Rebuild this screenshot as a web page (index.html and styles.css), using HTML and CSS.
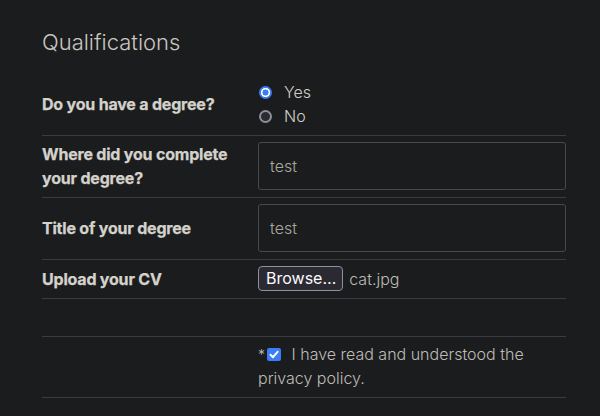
FILE: index.html
```html
<!DOCTYPE html>
<html lang="en">
<head>
<meta charset="utf-8">
<title>Qualifications</title>
<link rel="stylesheet" href="styles.css">
</head>
<body>
<section class="form">
  <h2 class="title">Qualifications</h2>
  <div class="row">
    <div class="label">Do you have a degree?</div>
    <div class="field radios">
      <label class="opt"><input type="radio" name="deg" class="radio" checked><span>Yes</span></label>
      <label class="opt"><input type="radio" name="deg" class="radio"><span>No</span></label>
    </div>
  </div>
  <div class="row">
    <div class="label">Where did you complete your degree?</div>
    <div class="field"><input class="text" type="text" value="test"></div>
  </div>
  <div class="row">
    <div class="label">Title of your degree</div>
    <div class="field"><input class="text" type="text" value="test"></div>
  </div>
  <div class="row">
    <div class="label">Upload your CV</div>
    <div class="field file"><span class="browse">Browse…</span><span class="fname">cat.jpg</span></div>
  </div>
  <div class="row">
    <div class="label"></div>
    <div class="field empty"></div>
  </div>
  <div class="row">
    <div class="label"></div>
    <div class="field consent"><span class="star">*</span><input type="checkbox" class="check" checked> I have read and understood the privacy policy.</div>
  </div>
</section>
</body>
</html>
```
FILE: styles.css
```css
html, body {
  margin: 0;
  background: #1b1c1e;
}
body {
  font-family: "Inter", "Noto Sans", sans-serif;
  color: #d3d1ca;
}
.form {
  width: 524px;
  margin-left: 42px;
}
.title {
  margin: 0;
  padding-top: 27px;
  height: 47px;
  font-size: 22px;
  font-weight: 300;
  line-height: 30px;
  color: #c9c7c0;
}
.row {
  display: grid;
  grid-template-columns: 216px 1fr;
  align-items: center;
  padding: 6px 0 7px;
  border-bottom: 1px solid #3b3c3f;
}
.label {
  font-weight: 700;
  font-size: 16px;
  line-height: 24px;
  color: #d4d2cb;
  padding-right: 20px;
  letter-spacing: -0.2px;
  -webkit-text-stroke: 0.25px #d4d2cb;
}
.field {
  font-size: 16px;
  line-height: 24px;
  color: #bebcb6;
  font-weight: 300;
}
.radios {
  display: flex;
  flex-direction: column;
}
.opt {
  display: flex;
  align-items: center;
  color: #d0cec7;
}
.radio {
  appearance: none;
  margin: 0 12px 0 1px;
  width: 13px;
  height: 13px;
  border-radius: 50%;
  box-sizing: border-box;
  border: 2px solid #8f8e96;
  background: #2b2a33;
}
.radio:checked {
  border: none;
  background: radial-gradient(circle, #3b7df6 0 2.8px, #ffffff 3.3px 4.3px, #3b7df6 4.8px);
}
.text {
  display: block;
  box-sizing: border-box;
  width: 100%;
  height: 48px;
  margin: 0;
  padding: 0 11px;
  background: transparent;
  border: 1px solid #48494c;
  border-radius: 3px;
  font: 300 16px "Inter", "Noto Sans", sans-serif;
  color: #aaa8a2;
  outline: none;
}
.file {
  display: flex;
  align-items: center;
  gap: 6px;
}
.browse {
  box-sizing: border-box;
  height: 25px;
  line-height: 23px;
  padding: 0 6px 0 7px;
  background: #2b2a33;
  border: 1px solid #8f8f9d;
  border-radius: 4px;
  color: #fbfbfe;
  font-weight: 400;
}
.fname {
  color: #bebcb6;
}
.empty {
  height: 24px;
}
.consent {
  margin-top: -1px;
}
.star {
  display: inline-block;
  font-size: 14px;
  line-height: 0;
  margin-right: 3px;
}
.check {
  appearance: none;
  vertical-align: -1px;
  width: 14px;
  height: 13px;
  margin: 0 6px 0 -1px;
  border-radius: 2px;
  background: #3b7df6 url("data:image/svg+xml;utf8,<svg xmlns='http://www.w3.org/2000/svg' viewBox='0 0 14 13'><path d='M3.5 6.8 L6 9.2 L10.6 3.8' fill='none' stroke='white' stroke-width='2' stroke-linecap='round' stroke-linejoin='round'/></svg>") center/100% 100% no-repeat;
}
```
